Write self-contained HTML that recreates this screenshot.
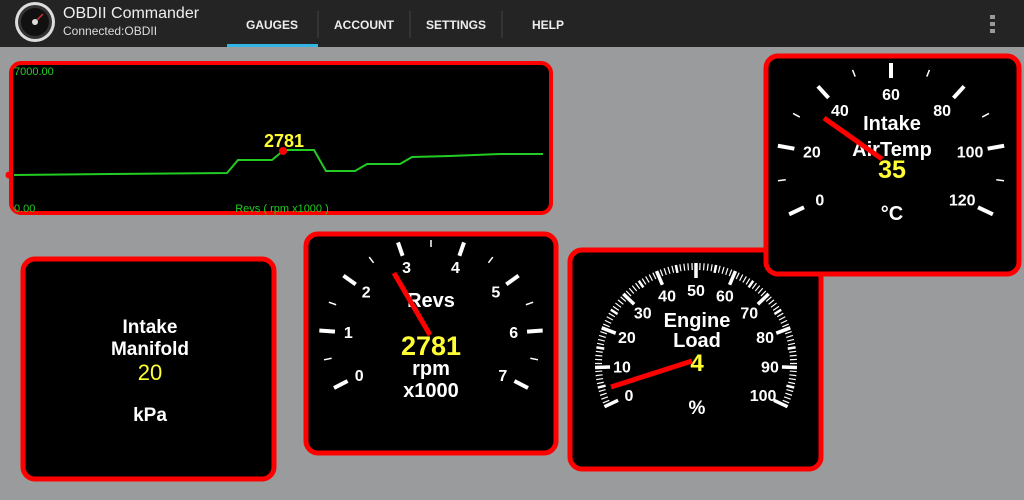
<!DOCTYPE html>
<html><head><meta charset="utf-8"><style>
html,body{margin:0;padding:0;width:1024px;height:500px;overflow:hidden;background:#989a9c;font-family:"Liberation Sans",sans-serif}
svg{display:block}
</style></head><body>
<svg id="s" width="1024" height="500" xmlns="http://www.w3.org/2000/svg" font-family="Liberation Sans, sans-serif" font-weight="bold">
<rect x="0" y="0" width="1024" height="500" fill="#9a9b9d"/>
<rect x="0" y="0" width="1024" height="47" fill="#242424"/>
<circle cx="35" cy="22" r="20" fill="#ddd"/>
<circle cx="35" cy="22" r="17" fill="#333"/>
<circle cx="35" cy="22" r="14" fill="#111"/>
<line x1="35" y1="22" x2="43" y2="14" stroke="#c33" stroke-width="1.5"/>
<circle cx="35" cy="22" r="3" fill="#ddd"/>
<text x="63" y="18" fill="#eee" font-size="16" font-weight="normal">OBDII Commander</text>
<text x="63" y="35" fill="#ddd" font-size="12" font-weight="normal">Connected:OBDII</text>
<text x="272" y="29" fill="#eee" font-size="12" text-anchor="middle">GAUGES</text>
<rect x="227" y="44" width="91" height="3" fill="#33b5e5"/>
<line x1="318" y1="11" x2="318" y2="38" stroke="#444"/>
<text x="364" y="29" fill="#eee" font-size="12" text-anchor="middle">ACCOUNT</text>
<line x1="410" y1="11" x2="410" y2="38" stroke="#444"/>
<text x="456" y="29" fill="#eee" font-size="12" text-anchor="middle">SETTINGS</text>
<line x1="502" y1="11" x2="502" y2="38" stroke="#444"/>
<text x="548" y="29" fill="#eee" font-size="12" text-anchor="middle">HELP</text>
<rect x="990" y="15" width="5" height="4" fill="#999"/><rect x="990" y="22" width="5" height="4" fill="#999"/><rect x="990" y="29" width="5" height="4" fill="#999"/>

<!-- graph -->
<rect x="11" y="63" width="540" height="150" rx="10" fill="#000" stroke="#f00" stroke-width="4"/>
<text x="14" y="75" fill="#2c2" font-size="11" font-weight="normal">7000.00</text>
<text x="14" y="212" fill="#2c2" font-size="11" font-weight="normal">0.00</text>
<text x="282" y="212" fill="#2c2" font-size="11" font-weight="normal" text-anchor="middle">Revs ( rpm x1000 )</text>
<polyline fill="none" stroke="#2c2" stroke-width="2" points="14,175 110,174 227,173 238,160 272,160 284,150 314,150 326,171 355,171 367,164 400,164 412,157 450,156 500,154 543,154"/>
<circle cx="9" cy="175" r="3.5" fill="#f00"/>
<circle cx="283" cy="151" r="4" fill="#f00"/>
<text x="284" y="147" fill="#ff3" font-size="18" text-anchor="middle">2781</text>

<!-- manifold -->
<rect x="23" y="259" width="251" height="220" rx="12" fill="#000" stroke="#f00" stroke-width="5"/>
<g fill="#fff" font-size="19" text-anchor="middle"><text x="150" y="333">Intake</text><text x="150" y="355">Manifold</text><text x="150" y="421">kPa</text></g>
<text x="150" y="380" fill="#ff3" font-size="22" text-anchor="middle" font-weight="normal">20</text>

<!-- revs -->
<rect x="306" y="234" width="250" height="219" rx="12" fill="#000" stroke="#f00" stroke-width="5"/>
<g id="revs"></g>

<!-- engine load -->
<rect x="570" y="250" width="251" height="219" rx="12" fill="#000" stroke="#f00" stroke-width="5"/>
<g id="load"></g>

<!-- air temp -->
<rect x="766" y="56" width="253" height="218" rx="12" fill="#000" stroke="#f00" stroke-width="5"/>
<g id="air"></g>
</svg>
<script>
var NS="http://www.w3.org/2000/svg";
function el(g,t,a,txt){var e=document.createElementNS(NS,t);for(var k in a)e.setAttribute(k,a[k]);if(txt!==undefined)e.textContent=txt;document.getElementById(g).appendChild(e);return e;}
function pt(cx,cy,r,a,sx){sx=sx||1;var rad=a*Math.PI/180;return [cx+sx*r*Math.cos(rad),cy-r*Math.sin(rad)];}
function tick(g,cx,cy,r1,r2,a,w,sx){var p=pt(cx,cy,r1,a,sx),q=pt(cx,cy,r2,a,sx);el(g,"line",{x1:p[0],y1:p[1],x2:q[0],y2:q[1],stroke:"#fff","stroke-width":w});}
function lab(g,cx,cy,r,a,t,fs,sx){var p=pt(cx,cy,r,a,sx);el(g,"text",{x:p[0],y:p[1]+fs*0.36,fill:"#fff","font-size":fs,"text-anchor":"middle"},t);}
// revs
(function(){var cx=431,cy=338,s=210,st=240/7,sx=1.12;
for(var i=0;i<=14;i++){var a=s-i*st/2;if(i%2==0){tick("revs",cx,cy,86,100,a,4,sx);lab("revs",cx,cy,74,a,String(i/2),16,sx);}else tick("revs",cx,cy,91,98,a,1.5,sx);}
el("revs","text",{x:431,y:307,fill:"#fff","font-size":20,"text-anchor":"middle"},"Revs");
el("revs","text",{x:431,y:355,fill:"#ff3","font-size":27,"text-anchor":"middle"},"2781");
el("revs","text",{x:431,y:375,fill:"#fff","font-size":20,"text-anchor":"middle"},"rpm");
el("revs","text",{x:431,y:397,fill:"#fff","font-size":20,"text-anchor":"middle"},"x1000");
el("revs","line",{x1:430,y1:335,x2:394,y2:273,stroke:"#f00","stroke-width":5});})();
// load
(function(){var cx=696,cy=364,s=205,sw=230;
for(var i=0;i<=100;i++){var a=s-i*sw/100;if(i%10==0){tick("load",cx,cy,86,101,a,3.5);lab("load",cx,cy,74,a,String(i),16);}else if(i%5==0)tick("load",cx,cy,93,101,a,2.5);else tick("load",cx,cy,94,101,a,1.2);}
el("load","text",{x:697,y:327,fill:"#fff","font-size":20,"text-anchor":"middle"},"Engine");
el("load","text",{x:697,y:347,fill:"#fff","font-size":20,"text-anchor":"middle"},"Load");
el("load","text",{x:697,y:371,fill:"#ff3","font-size":24,"text-anchor":"middle"},"4");
el("load","text",{x:697,y:414,fill:"#fff","font-size":19,"text-anchor":"middle"},"%");
el("load","line",{x1:692,y1:361,x2:611,y2:387,stroke:"#f00","stroke-width":5});})();
// air
(function(){var cx=891,cy=166,s=208,sw=236,sx=1.12;
for(var i=0;i<=12;i++){var a=s-i*sw/12;if(i%2==0){tick("air",cx,cy,88,103,a,4,sx);lab("air",cx,cy,72,a,String(i*10),16,sx);}else tick("air",cx,cy,95,102,a,1.5,sx);}
el("air","text",{x:892,y:130,fill:"#fff","font-size":20,"text-anchor":"middle"},"Intake");
el("air","text",{x:892,y:156,fill:"#fff","font-size":20,"text-anchor":"middle"},"AirTemp");
el("air","text",{x:892,y:178,fill:"#ff3","font-size":25,"text-anchor":"middle"},"35");
el("air","text",{x:892,y:220,fill:"#fff","font-size":20,"text-anchor":"middle"},"°C");
el("air","line",{x1:882,y1:159,x2:824,y2:118,stroke:"#f00","stroke-width":5});})();
</script>
</body></html>
